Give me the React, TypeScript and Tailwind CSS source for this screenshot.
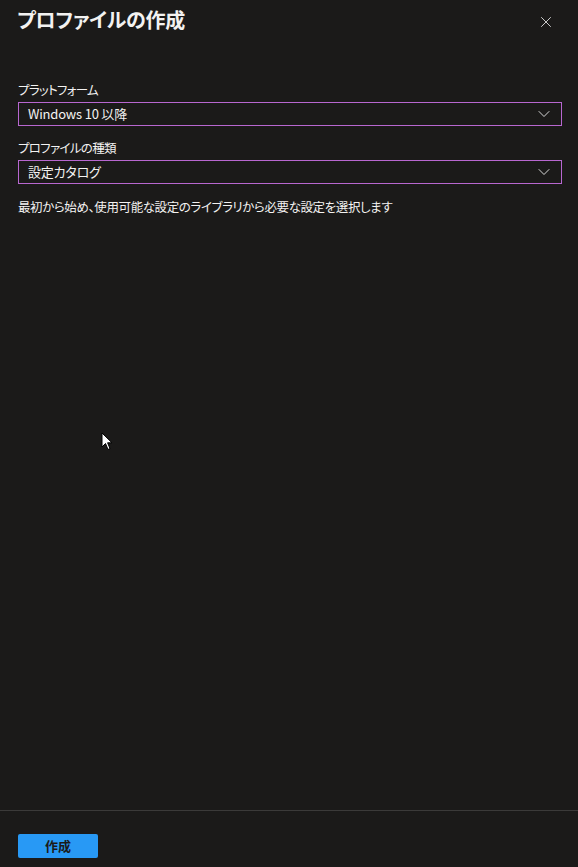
import { ChevronDown, X } from "lucide-react";

function Field({ label, value }: { label: string; value: string }) {
    return (
        <div>
            <label className="block text-[12.5px] leading-[18px] tracking-[-0.7px] text-[#f3f2f1]">{label}</label>
            <div className="mt-[3px] flex h-6 items-center justify-between border border-[#b867d0] pl-[9px] pr-[7px]">
                <span className="text-[13px] tracking-[-0.2px] text-[#f3f2f1]">{value}</span>
                <ChevronDown className="h-[20px] w-[20px] text-[#e8e8e8]" strokeWidth={1.1} />
            </div>
        </div>
    );
}

export default function App() {
    return (
        <div
            className="relative flex h-[867px] w-[578px] flex-col overflow-hidden bg-[#1b1a19] text-[#f3f2f1] [font-feature-settings:'palt']"
            style={{ fontFamily: '"Segoe UI", "Noto Sans CJK JP", sans-serif' }}
        >
            <div className="flex items-start justify-between pl-[17px] pr-[23px] pt-[3px]">
                <h1 className="text-[20px] font-bold leading-[34px] tracking-[-0.2px]">プロファイルの作成</h1>
                <button type="button" className="mt-[10px] text-[#d0d0d0]">
                    <X className="h-[18px] w-[18px]" strokeWidth={1.3} />
                </button>
            </div>

            <div className="flex-1 px-[16px] pl-[18px] pt-[44px]">
                <div className="flex flex-col gap-[13px]">
                    <Field label="プラットフォーム" value="Windows 10 以降" />
                    <Field label="プロファイルの種類" value="設定カタログ" />
                </div>
                <p className="mt-[14px] text-[12.5px] leading-[18px] tracking-[-0.4px] text-[#f3f2f1]">
                    最初から始め、使用可能な設定のライブラリから必要な設定を選択します
                </p>
            </div>

            <div className="border-t border-[#3b3a39] px-[18px] pb-[9px] pt-[21px]">
                <button
                    type="button"
                    className="h-6 w-20 rounded-[2px] bg-[#2899f5] text-[13px] font-bold text-[#1b1a19]"
                >
                    作成
                </button>
            </div>

            <svg className="absolute left-[101px] top-[432px]" width="12" height="19" viewBox="0 0 12 19">
                <path d="M1 1 L1 15 L4.5 11.5 L7 17.5 L9 16.6 L6.6 10.8 L11 10.8 Z" fill="#ffffff" stroke="#000" strokeWidth="1" />
            </svg>
        </div>
    );
}
